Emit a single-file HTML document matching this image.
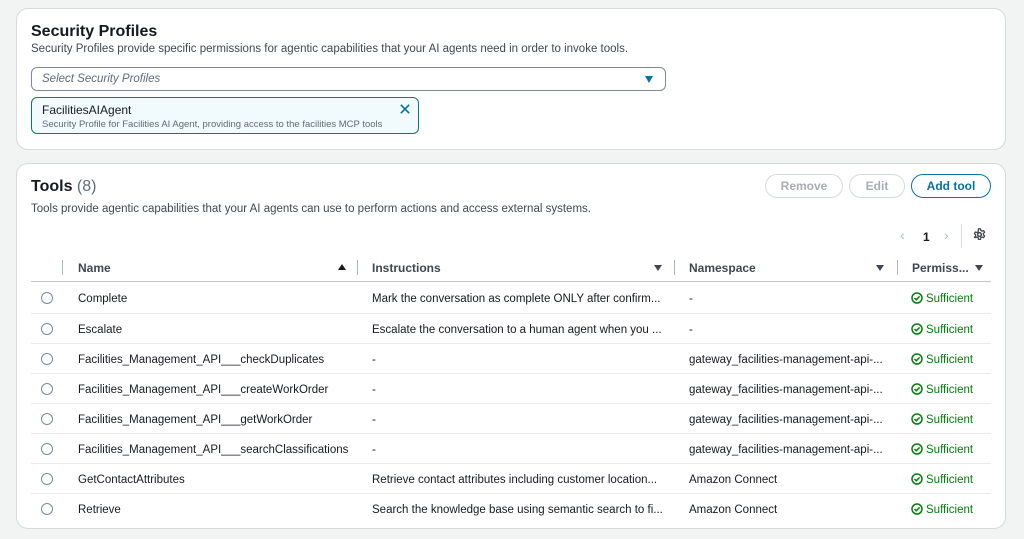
<!DOCTYPE html>
<html><head><meta charset="utf-8"><style>
*{box-sizing:border-box;margin:0;padding:0}
body{width:1024px;height:539px;background:#f2f3f3;font-family:"Liberation Sans",sans-serif;color:#16191f;position:relative;overflow:hidden}
.card{position:absolute;left:16px;width:990px;background:#fff;border:1px solid #d5dbdb;border-radius:12px}
.abs{position:absolute;white-space:nowrap}
h2{font-size:16px;font-weight:bold}
.d{font-size:11.5px;color:#414750}
.btn{position:absolute;top:10px;height:24px;border-radius:14px;border:1.5px solid #d5dbdb;font-size:12px;font-weight:bold;color:#a8adb3;display:flex;align-items:center;justify-content:center}
.th{position:absolute;top:97px;font-size:12px;font-weight:bold;color:#414750}
.sep{position:absolute;top:96px;width:1px;height:15px;background:#aab7b8}
.row{position:absolute;left:14px;width:960px;height:30px;border-top:1px solid #e9ebed;font-size:11.5px;color:#16191f}
.row span{position:absolute;top:2px;line-height:29px;white-space:nowrap}
.radio{position:absolute;left:10px;top:9px;width:12px;height:12px;border:1.5px solid #7d8998;border-radius:50%}
.ok{color:#037f0c}
.ok svg{vertical-align:-2px;margin-right:3px}
.tri{position:absolute;top:100px;width:0;height:0;border-left:4px solid transparent;border-right:4px solid transparent}
</style></head><body>
<div class="card" style="top:8px;height:142px">
 <h2 class="abs" style="left:14px;top:14px">Security Profiles</h2>
 <div class="abs d" style="left:14px;top:34px">Security Profiles provide specific permissions for agentic capabilities that your AI agents need in order to invoke tools.</div>
 <div class="abs" style="left:14px;top:58px;width:635px;height:24px;border:1px solid #7d8998;border-radius:6px">
  <span class="abs" style="left:10px;top:5px;font-size:11.5px;font-style:italic;color:#5f6b7a">Select Security Profiles</span>
  <span class="abs" style="right:12px;top:8px;border-left:4px solid transparent;border-right:4px solid transparent;border-top:7px solid #0972a0"></span>
 </div>
 <div class="abs" style="left:14px;top:88px;width:388px;height:37px;border:1.5px solid #0972a0;border-radius:6px;background:#f1fafc">
  <span class="abs" style="left:10px;top:5px;font-size:12px;color:#16191f">FacilitiesAIAgent</span>
  <span class="abs" style="left:10px;top:21px;font-size:9.5px;color:#5f6b7a">Security Profile for Facilities AI Agent, providing access to the facilities MCP tools</span>
  <svg class="abs" style="right:8px;top:6px" width="10" height="10" viewBox="0 0 12 12"><path d="M1 1L11 11M11 1L1 11" stroke="#0972a0" stroke-width="2"/></svg>
 </div>
</div>
<div class="card" style="top:163px;height:366px">
 <h2 class="abs" style="left:14px;top:14px">Tools <span style="font-weight:normal;color:#5f6b7a">(8)</span></h2>
 <div class="abs d" style="left:14px;top:39px">Tools provide agentic capabilities that your AI agents can use to perform actions and access external systems.</div>
 <div class="btn" style="left:748px;width:78px">Remove</div>
 <div class="btn" style="left:832px;width:56px">Edit</div>
 <div class="btn" style="left:894px;width:80px;border-color:#0972a0;color:#0972a0">Add tool</div>
 <span class="abs" style="left:883px;top:63px;font-size:14px;color:#aab7b8">‹</span>
 <span class="abs" style="left:906px;top:66px;font-size:12px;font-weight:bold">1</span>
 <span class="abs" style="left:927px;top:63px;font-size:14px;color:#aab7b8">›</span>
 <div class="abs" style="left:944px;top:60px;width:1px;height:24px;background:#d5dbdb"></div>
 <svg class="abs" style="left:956px;top:64px" width="13" height="13" viewBox="0 0 16 16"><circle cx="8" cy="8" r="2.3" fill="none" stroke="#414750" stroke-width="1.8"/><path d="M6.8 1h2.4l.4 2 1.6.9 1.9-.7 1.2 2.1-1.5 1.3v1.8l1.5 1.3-1.2 2.1-1.9-.7-1.6.9-.4 2H6.8l-.4-2-1.6-.9-1.9.7L1.7 11.4l1.5-1.3V8.3L1.7 7l1.2-2.1 1.9.7 1.6-.9z" fill="none" stroke="#414750" stroke-width="1.6" stroke-linejoin="round"/></svg>
 <div class="sep" style="left:45px"></div>
 <div class="th" style="left:61px">Name</div>
 <div class="tri" style="left:321px;border-bottom:6px solid #16191f"></div>
 <div class="sep" style="left:340px"></div>
 <div class="th" style="left:355px">Instructions</div>
 <div class="tri" style="left:637px;top:101px;border-top:6px solid #414750"></div>
 <div class="sep" style="left:657px"></div>
 <div class="th" style="left:672px">Namespace</div>
 <div class="tri" style="left:859px;top:101px;border-top:6px solid #414750"></div>
 <div class="sep" style="left:880px"></div>
 <div class="th" style="left:895px">Permiss...</div>
 <div class="tri" style="left:958px;top:101px;border-top:6px solid #414750"></div>
 <div class="abs" style="left:14px;top:117px;width:960px;height:1px;background:#c6c6cd"></div>
 <div style="position:absolute;left:0;top:119px;width:990px">
  <div class="row" style="top:0;border-top:none"><i class="radio"></i><span style="left:47px">Complete</span><span style="left:341px">Mark the conversation as complete ONLY after confirm...</span><span style="left:658px">-</span><span class="ok" style="left:880px"><svg width="12" height="12" viewBox="0 0 12 12"><circle cx="6" cy="6" r="5" fill="none" stroke="#037f0c" stroke-width="1.5"/><path d="M3.5 6l1.8 1.8L8.6 4.4" fill="none" stroke="#037f0c" stroke-width="1.5"/></svg>Sufficient</span></div>
  <div class="row" style="top:30px"><i class="radio"></i><span style="left:47px">Escalate</span><span style="left:341px">Escalate the conversation to a human agent when you ...</span><span style="left:658px">-</span><span class="ok" style="left:880px"><svg width="12" height="12" viewBox="0 0 12 12"><circle cx="6" cy="6" r="5" fill="none" stroke="#037f0c" stroke-width="1.5"/><path d="M3.5 6l1.8 1.8L8.6 4.4" fill="none" stroke="#037f0c" stroke-width="1.5"/></svg>Sufficient</span></div>
  <div class="row" style="top:60px"><i class="radio"></i><span style="left:47px">Facilities_Management_API___checkDuplicates</span><span style="left:341px">-</span><span style="left:658px">gateway_facilities-management-api-...</span><span class="ok" style="left:880px"><svg width="12" height="12" viewBox="0 0 12 12"><circle cx="6" cy="6" r="5" fill="none" stroke="#037f0c" stroke-width="1.5"/><path d="M3.5 6l1.8 1.8L8.6 4.4" fill="none" stroke="#037f0c" stroke-width="1.5"/></svg>Sufficient</span></div>
  <div class="row" style="top:90px"><i class="radio"></i><span style="left:47px">Facilities_Management_API___createWorkOrder</span><span style="left:341px">-</span><span style="left:658px">gateway_facilities-management-api-...</span><span class="ok" style="left:880px"><svg width="12" height="12" viewBox="0 0 12 12"><circle cx="6" cy="6" r="5" fill="none" stroke="#037f0c" stroke-width="1.5"/><path d="M3.5 6l1.8 1.8L8.6 4.4" fill="none" stroke="#037f0c" stroke-width="1.5"/></svg>Sufficient</span></div>
  <div class="row" style="top:120px"><i class="radio"></i><span style="left:47px">Facilities_Management_API___getWorkOrder</span><span style="left:341px">-</span><span style="left:658px">gateway_facilities-management-api-...</span><span class="ok" style="left:880px"><svg width="12" height="12" viewBox="0 0 12 12"><circle cx="6" cy="6" r="5" fill="none" stroke="#037f0c" stroke-width="1.5"/><path d="M3.5 6l1.8 1.8L8.6 4.4" fill="none" stroke="#037f0c" stroke-width="1.5"/></svg>Sufficient</span></div>
  <div class="row" style="top:150px"><i class="radio"></i><span style="left:47px">Facilities_Management_API___searchClassifications</span><span style="left:341px">-</span><span style="left:658px">gateway_facilities-management-api-...</span><span class="ok" style="left:880px"><svg width="12" height="12" viewBox="0 0 12 12"><circle cx="6" cy="6" r="5" fill="none" stroke="#037f0c" stroke-width="1.5"/><path d="M3.5 6l1.8 1.8L8.6 4.4" fill="none" stroke="#037f0c" stroke-width="1.5"/></svg>Sufficient</span></div>
  <div class="row" style="top:180px"><i class="radio"></i><span style="left:47px">GetContactAttributes</span><span style="left:341px">Retrieve contact attributes including customer location...</span><span style="left:658px">Amazon Connect</span><span class="ok" style="left:880px"><svg width="12" height="12" viewBox="0 0 12 12"><circle cx="6" cy="6" r="5" fill="none" stroke="#037f0c" stroke-width="1.5"/><path d="M3.5 6l1.8 1.8L8.6 4.4" fill="none" stroke="#037f0c" stroke-width="1.5"/></svg>Sufficient</span></div>
  <div class="row" style="top:210px"><i class="radio"></i><span style="left:47px">Retrieve</span><span style="left:341px">Search the knowledge base using semantic search to fi...</span><span style="left:658px">Amazon Connect</span><span class="ok" style="left:880px"><svg width="12" height="12" viewBox="0 0 12 12"><circle cx="6" cy="6" r="5" fill="none" stroke="#037f0c" stroke-width="1.5"/><path d="M3.5 6l1.8 1.8L8.6 4.4" fill="none" stroke="#037f0c" stroke-width="1.5"/></svg>Sufficient</span></div>
 </div>
</div>
</body></html>
